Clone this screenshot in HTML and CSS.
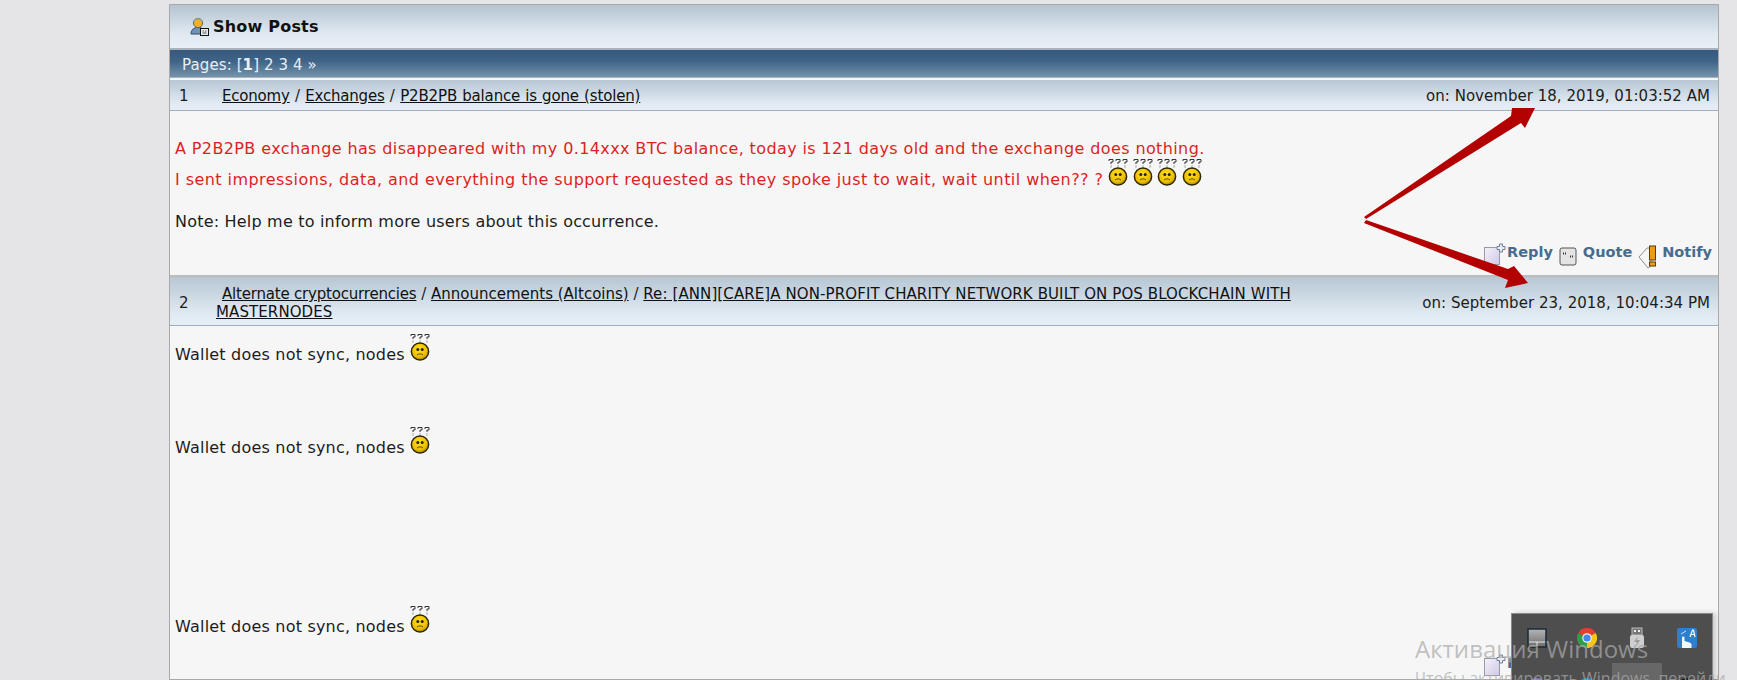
FILE: index.html
```html
<!DOCTYPE html>
<html lang="en">
<head>
<meta charset="utf-8">
<title>Show Posts</title>
<link rel="stylesheet" href="styles.css">
</head>
<body>
<svg class="sprite" width="0" height="0" aria-hidden="true">
  <defs>
    <radialGradient id="face" cx="45%" cy="35%" r="70%">
      <stop offset="0" stop-color="#ffdf1f"/>
      <stop offset=".65" stop-color="#eebf00"/>
      <stop offset="1" stop-color="#9c7c00"/>
    </radialGradient>
    <symbol id="smiley" viewBox="0 0 20 27">
      <path d="M1 2V.5h4V3H3v2M8 2V.5h4V3h-2v2M15 2V.5h4V3h-2v2" fill="none" stroke="#333" stroke-width="1"/>
      <path d="M3 6v3M10 6v3M17 6v3" stroke="#aaa" stroke-width="1"/>
      <circle cx="10" cy="17.500" r="8.600" fill="url(#face)" stroke="#2e2800" stroke-width="1.500"/>
      <circle cx="7.800" cy="15.500" r="1.500" fill="#2a2400"/>
      <circle cx="12.200" cy="15.500" r="1.500" fill="#2a2400"/>
      <path d="M7 21c1.500-1.500 4.500-1.500 6 0" fill="none" stroke="#5a4a00" stroke-width="1"/>
    </symbol>
    <linearGradient id="sheet" x1="0" y1="0" x2="1" y2="1">
      <stop offset="0" stop-color="#f4f2fb"/>
      <stop offset="1" stop-color="#cfc8e6"/>
    </linearGradient>
    <symbol id="reply-icon" viewBox="0 0 24 22">
      <rect x="1.500" y="4.500" width="15" height="17" fill="url(#sheet)" stroke="#9a9aa6"/>
      <path d="M16.500 1h3v2.500H22v3h-2.500V9h-3V6.500H14v-3h2.500z" fill="#e8eef5" stroke="#6d7f92"/>
    </symbol>
    <symbol id="quote-icon" viewBox="0 0 18 19">
      <rect x="1" y="1" width="16" height="17" rx="2" fill="#e4e4e4" stroke="#555"/>
      <path d="M4.500 5.500v2M6.500 5.500v2M11.500 8.500v2M13.500 8.500v2" stroke="#333" stroke-width="1"/>
    </symbol>
    <symbol id="notify-icon" viewBox="0 0 21 24">
      <path d="M1 12 9 3h4v18l-3 2z" fill="#f5f5f5" stroke="#8d8d8d"/>
      <rect x="11.500" y="1" width="6" height="14" fill="#f09a1a" stroke="#5a3b00"/>
      <rect x="11.500" y="17" width="6" height="4" fill="#f09a1a" stroke="#5a3b00"/>
    </symbol>
  </defs>
</svg>

<main class="panel">
  <header class="panel-title">
    <svg class="title-icon" viewBox="0 0 19 19" width="19" height="19" aria-hidden="true">
      <path d="M1 17c0-4 2.500-6.500 7-6.500s7 2.500 7 6.500z" fill="#6f93b8" stroke="#33475c"/>
      <circle cx="8" cy="6" r="4.600" fill="#eeb02c" stroke="#6b6350"/>
      <path d="M4 4.500C5 1 11 1 12 4.500" fill="none" stroke="#9aa0a6" stroke-width="1.500"/>
      <rect x="10.500" y="11.500" width="8" height="7" fill="#e9edf0" stroke="#111"/>
      <path d="M12.500 14h1.500M15 14h1.500M12.500 16h4" stroke="#555"/>
    </svg>
    <span>Show Posts</span>
  </header>
  <nav class="pages">Pages: [<b>1</b>] 2 3 4 »</nav>

  <article class="post post-first">
    <div class="post-head">
      <span class="post-num">1</span>
      <div class="post-crumbs"><a class="crumb-tight">Economy</a> / <a class="crumb-tight">Exchanges</a> / <a class="crumb-slim">P2B2PB balance is gone (stolen)</a></div>
      <span class="post-date">on: November 18, 2019, 01:03:52 AM</span>
    </div>
    <div class="post-body">
      <p class="msg-red msg-red-first">A P2B2PB exchange has disappeared with my 0.14xxx BTC balance, today is 121 days old and the exchange does nothing.</p>
      <p class="msg-red">I sent impressions, data, and everything the support requested as they spoke just to wait, wait until when?? ?<svg class="smiley smiley-first"><use href="#smiley"/></svg><svg class="smiley"><use href="#smiley"/></svg><svg class="smiley"><use href="#smiley"/></svg><svg class="smiley"><use href="#smiley"/></svg></p>
      <p class="note">Note: Help me to inform more users about this occurrence.</p>
      <div class="actions">
        <a class="action action-reply"><svg class="ic-reply"><use href="#reply-icon"/></svg>Reply</a>
        <a class="action"><svg class="ic-quote"><use href="#quote-icon"/></svg>Quote</a>
        <a class="action"><svg class="ic-notify"><use href="#notify-icon"/></svg>Notify</a>
      </div>
    </div>
  </article>

  <article class="post post-second">
    <div class="post-head post-head-tall">
      <span class="post-num">2</span>
      <div class="post-crumbs post-crumbs-wrap"><span class="crumb-indent"></span><a class="crumb-tight">Alternate cryptocurrencies</a> / <a>Announcements (Altcoins)</a> / <a class="crumb-wide">Re: [ANN][CARE]A NON-PROFIT CHARITY NETWORK BUILT ON POS BLOCKCHAIN WITH MASTERNODES</a></div>
      <span class="post-date">on: September 23, 2018, 10:04:34 PM</span>
    </div>
    <div class="post-body post-body-long">
      <p class="wallet wallet-1">Wallet does not sync, nodes<svg class="smiley smiley-first"><use href="#smiley"/></svg></p>
      <p class="wallet wallet-2">Wallet does not sync, nodes<svg class="smiley smiley-first"><use href="#smiley"/></svg></p>
      <p class="wallet wallet-3">Wallet does not sync, nodes<svg class="smiley smiley-first"><use href="#smiley"/></svg></p>
      <div class="actions actions-low">
        <a class="action action-reply"><svg class="ic-reply"><use href="#reply-icon"/></svg>Reply</a>
        <a class="action"><svg class="ic-quote"><use href="#quote-icon"/></svg>Quote</a>
        <a class="action"><svg class="ic-notify"><use href="#notify-icon"/></svg>Notify</a>
      </div>
    </div>
  </article>
</main>

<svg class="arrows" viewBox="0 0 1737 680" aria-hidden="true">
  <path d="M1364 217 1511 116 1512 108 1535 108 1525 128 1521 123 1366 219z" fill="#b30000"/>
  <path d="M1366 220 1508 269 1514 266 1528 283 1505 288 1508 280 1364 223z" fill="#b30000"/>
</svg>

<aside class="tray">
  <span class="tray-cell">
    <svg viewBox="0 0 20 20" width="20" height="20" aria-hidden="true">
      <defs><linearGradient id="tp" x1="0" y1="0" x2="0" y2="1"><stop offset="0" stop-color="#b5b5b5"/><stop offset="1" stop-color="#6c6c6c"/></linearGradient></defs>
      <rect x="1" y="1" width="18" height="18" fill="url(#tp)" stroke="#1d2a38" stroke-width="1.500"/>
      <path d="M2 14h16M10 14v4" stroke="#e8e8e8"/>
    </svg>
  </span>
  <span class="tray-cell">
    <svg viewBox="0 0 20 20" width="20" height="20" aria-hidden="true">
      <path d="M10 10 1.300 5A10 10 0 0 1 18.700 5z" fill="#e0402f"/>
      <path d="M10 10 18.700 5A10 10 0 0 1 10 20z" fill="#f5c518"/>
      <path d="M10 10 10 20A10 10 0 0 1 1.300 5z" fill="#2f9e47"/>
      <circle cx="10" cy="10" r="4.800" fill="#f2f2f2"/>
      <circle cx="10" cy="10" r="3.600" fill="#4a85e8"/>
    </svg>
  </span>
  <span class="tray-cell">
    <svg viewBox="0 0 16 22" width="16" height="22" aria-hidden="true">
      <rect x="3" y="1" width="10" height="7" fill="#777" stroke="#bbb"/>
      <rect x="5" y="3" width="2" height="2" fill="#eee"/>
      <rect x="9" y="3" width="2" height="2" fill="#eee"/>
      <rect x="1" y="8" width="14" height="13" rx="2" fill="#cfcfcf"/>
      <path d="M9 9 5 15h3l-1 5 4-7H8z" fill="#9d9d9d"/>
    </svg>
  </span>
  <span class="tray-cell">
    <svg viewBox="0 0 20 20" width="20" height="20" aria-hidden="true">
      <rect width="20" height="20" rx="2" fill="#2f7fd0"/>
      <path d="M5 20V9.500c0-1.500 2.500-1.500 2.500 0V13l5 1.500c1.500.5 2 1 2 2.500v3z" fill="#f4f8fc"/>
      <path d="M13 9 15.500 2h1L18 9M14 6.500h3" fill="none" stroke="#f4f8fc" stroke-width="1.200"/>
      <path d="M4 6 9 3" stroke="#cfe3f7" stroke-width="1"/>
    </svg>
  </span>
  <span class="tray-cell"><i class="tray-dot tray-dot-purple"></i></span>
  <span class="tray-cell"><i class="tray-dot tray-dot-blue"></i></span>
  <span class="tray-cell tray-cell-hover"></span>
  <span class="tray-cell"><i class="tray-dot tray-dot-dark"></i></span>
</aside>

<div class="watermark">
  <div class="wm-title">Активация Windows</div>
  <div class="wm-sub">Чтобы активировать Windows, перейди</div>
</div>
</body>
</html>
```

FILE: styles.css
```css
* { box-sizing: border-box; }

html, body {
  margin: 0;
  height: 680px;
  overflow: hidden;
}

body {
  position: relative;
  background: #e5e5e7;
  font-family: "DejaVu Sans", Verdana, sans-serif;
  font-size: 15px;
  color: #1c1c1c;
  padding: 4px 18px 0 169px;
}

.sprite { position: absolute; }

.panel {
  height: 676px;
  border: 1px solid #a9a9a9;
  background: #f6f6f6;
  overflow: hidden;
}

.panel-title {
  height: 45px;
  display: flex;
  align-items: center;
  gap: 4px;
  padding-left: 20px;
  font-weight: bold;
  font-size: 16px;
  letter-spacing: .2px;
  color: #111;
  background: linear-gradient(#b4c4d1, #dfe8f0 65%, #e8eff6);
  border-bottom: 2px solid #a7b4c0;
}

.title-icon { flex: none; }

.pages {
  height: 30px;
  display: flex;
  align-items: center;
  padding: 2px 0 0 12px;
  white-space: pre;
  letter-spacing: .1px;
  color: #e9eff5;
  background: linear-gradient(#36597d, #3f6488 40%, #7492ab 96%, #a9b4bd 96%);
  border-bottom: 2px solid #f4f6f8;
}

.post-head {
  height: 31px;
  display: flex;
  align-items: center;
  padding: 2px 8px 0 9px;
  background: linear-gradient(#b7c7d4, #e2ebf3 80%, #e6eef5);
  border-bottom: 1px solid #a0afbf;
}

.post-head-tall {
  height: 51px;
  padding-top: 4px;
  border-top: 2px solid #bcbcbc;
}

.post-num {
  flex: none;
  width: 43px;
}

.post-crumbs { flex: 1; }

.post-first .post-crumbs { word-spacing: .5px; }

.post-crumbs-wrap {
  flex: none;
  width: 1100px;
  margin-left: -6px;
  line-height: 18px;
}

.crumb-indent {
  display: inline-block;
  width: 6px;
}

.post-crumbs a {
  color: #111;
  text-decoration: underline;
}

.post-crumbs .crumb-tight { letter-spacing: -.2px; }
.post-crumbs .crumb-slim { letter-spacing: -.15px; }
.post-crumbs .crumb-wide { letter-spacing: .1px; }

.post-date {
  flex: none;
  margin-left: auto;
  letter-spacing: .03px;
}

.post-body {
  height: 164px;
  display: flex;
  flex-direction: column;
  padding: 22px 5px 0;
  font-size: 16px;
  letter-spacing: .2px;
}

.post-body-long { height: 353px; padding-top: 0; }

.post-body > * { flex: none; }

.post-body p { margin: 0; }

.msg-red {
  height: 31px;
  line-height: 31px;
  letter-spacing: .44px;
  color: #dc1f1f;
}

.msg-red-first { letter-spacing: .385px; }

.note {
  margin-top: 11px !important;
  height: 31px;
  line-height: 31px;
}

.smiley {
  width: 20px;
  height: 27px;
  margin-top: -12px;
  margin-left: 4.500px;
  vertical-align: -1px;
}

.smiley-first { margin-left: 5px; }

.wallet { height: 31px; line-height: 31px; }
.wallet-1 { margin-top: 13px !important; }
.wallet-2 { margin-top: 62px !important; }
.wallet-3 { margin-top: 148px !important; }

.actions {
  display: flex;
  justify-content: flex-end;
  align-items: flex-start;
  gap: 6px;
  margin-top: auto;
  margin-right: 1px;
  height: 32px;
  color: #476c8e;
  font-weight: bold;
  font-size: 14.500px;
  letter-spacing: 0;
}

.actions-low {
  margin-top: 12px;
}

.action {
  display: flex;
  align-items: flex-start;
  gap: 3px;
  line-height: 18px;
}

.ic-reply { width: 24px; height: 22px; margin-right: -3px; }
.ic-quote { width: 18px; height: 19px; margin: 4px 3px 0 0; }
.ic-notify { width: 21px; height: 24px; margin-top: 2px; }

.arrows {
  position: absolute;
  left: 0;
  top: 0;
  width: 1737px;
  height: 680px;
  pointer-events: none;
}

.tray {
  position: absolute;
  left: 1511px;
  top: 613px;
  width: 202px;
  height: 100px;
  padding: 0 1px;
  display: grid;
  grid-template-columns: repeat(4, 50px);
  grid-auto-rows: 50px;
  background: #4e4e4e;
  box-shadow: inset 0 0 0 1px #8a8a8a, 3px 0 5px rgba(0, 0, 0, .18);
}

.tray-cell {
  display: flex;
  align-items: center;
  justify-content: center;
}

.tray-cell-hover { background: #676767; }

.tray-dot {
  display: block;
  width: 20px;
  height: 20px;
  border-radius: 50%;
}

.tray-dot-purple { background: #8c80c8; }
.tray-dot-blue { background: #1f9bd8; }
.tray-dot-dark { background: #161616; }

.watermark {
  position: absolute;
  left: 1415px;
  top: 632px;
  width: 322px;
  font-family: "Open Sans", "Noto Sans", sans-serif;
  color: rgba(170, 170, 170, .72);
  white-space: nowrap;
  overflow: hidden;
  pointer-events: none;
}

.wm-title { font-size: 24px; line-height: 34px; }
.wm-sub { font-size: 16px; line-height: 24px; }
```
